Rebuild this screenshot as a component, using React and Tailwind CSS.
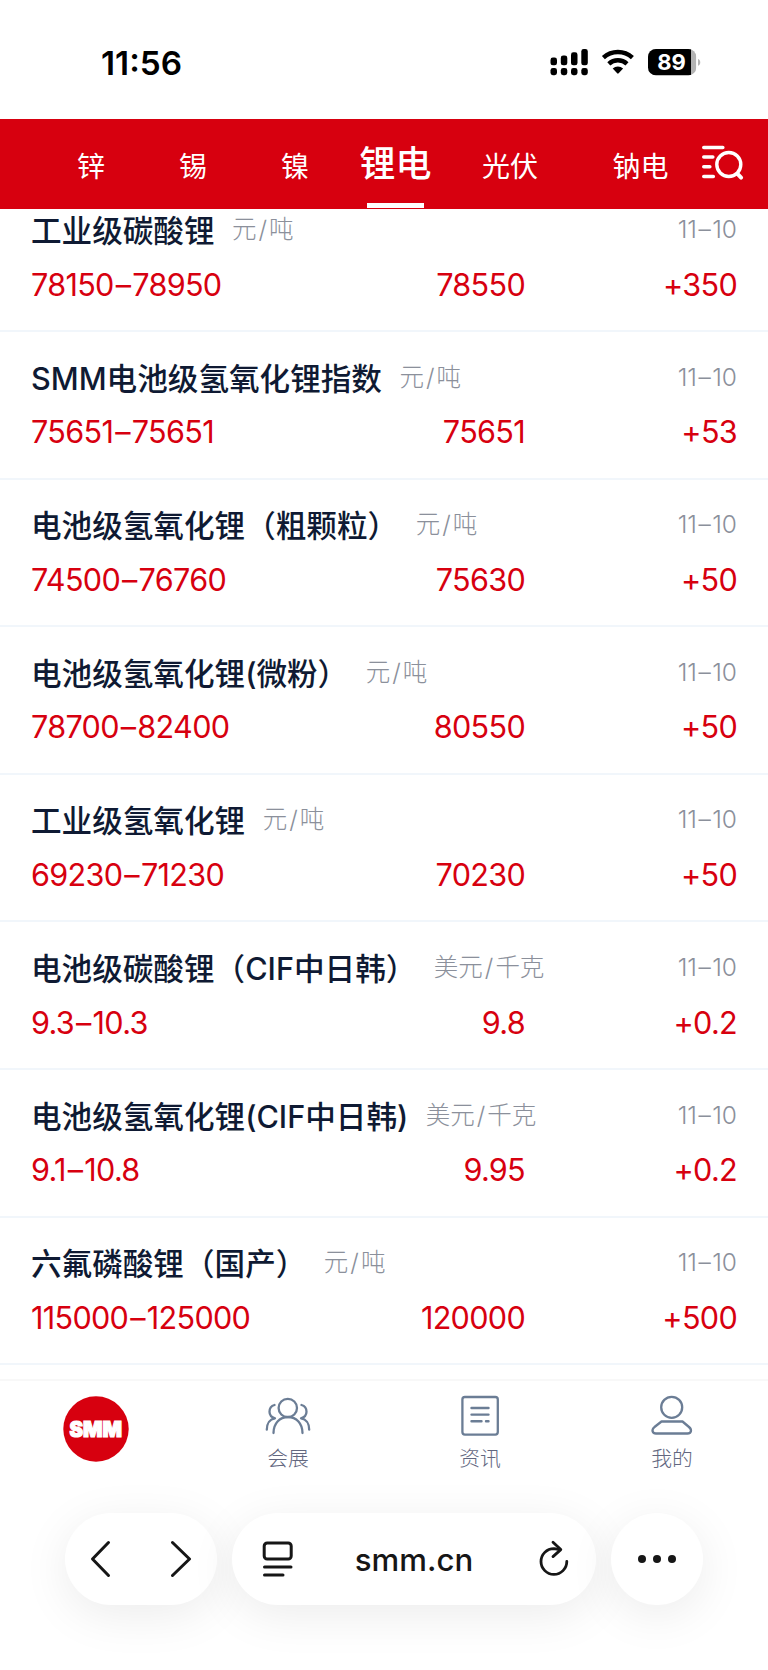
import clsx from "clsx";

const tabs = [
  { name: "锌", width: "w-[109px]" },
  { name: "锡", width: "w-[95px]" },
  { name: "镍", width: "w-[109px]" },
  { name: "锂电", width: "w-[92px]", active: true },
  { name: "光伏", width: "w-[137px]" },
  { name: "钠电", width: "w-[124px]" },
];

const prices = [
  { name: "工业级碳酸锂", unit: ["元", "吨"], low: "78150", high: "78950", avg: "78550", change: "+350" },
  { name: "SMM电池级氢氧化锂指数", unit: ["元", "吨"], low: "75651", high: "75651", avg: "75651", change: "+53" },
  { name: "电池级氢氧化锂（粗颗粒）", unit: ["元", "吨"], low: "74500", high: "76760", avg: "75630", change: "+50" },
  { name: "电池级氢氧化锂(微粉）", unit: ["元", "吨"], low: "78700", high: "82400", avg: "80550", change: "+50" },
  { name: "工业级氢氧化锂", unit: ["元", "吨"], low: "69230", high: "71230", avg: "70230", change: "+50" },
  { name: "电池级碳酸锂（CIF中日韩）", unit: ["美元", "千克"], low: "9.3", high: "10.3", avg: "9.8", change: "+0.2" },
  { name: "电池级氢氧化锂(CIF中日韩)", unit: ["美元", "千克"], low: "9.1", high: "10.8", avg: "9.95", change: "+0.2" },
  { name: "六氟磷酸锂（国产）", unit: ["元", "吨"], low: "115000", high: "125000", avg: "120000", change: "+500" },
];

function StatusBar() {
  return (
    <div className="flex h-[118.5px] shrink-0 items-start justify-between pl-[101px] pr-[67px]">
      <span className="mt-[43px] text-[33.3px] leading-[40px] font-semibold text-black">11:56</span>
      <svg className="mt-[48px]" width="151" height="28" viewBox="550 48 151 28">
        {/* signal */}
        <g fill="#000">
          <rect x="550.5" y="57.5" width="6.5" height="7.8" rx="2.4" />
          <rect x="560.8" y="55.5" width="6.5" height="9.8" rx="2.4" />
          <rect x="571" y="52.3" width="6.5" height="13" rx="2.4" />
          <rect x="581.3" y="49" width="6.5" height="16.3" rx="2.4" />
          <rect x="550.5" y="68" width="6.5" height="7.2" rx="2.4" />
          <rect x="560.8" y="68" width="6.5" height="7.2" rx="2.4" />
          <rect x="571" y="68" width="6.5" height="7.2" rx="2.4" />
          <rect x="581.3" y="68" width="6.5" height="7.2" rx="2.4" />
        </g>
        {/* wifi */}
        <g fill="none" stroke="#000" strokeWidth="4.4">
          <path d="M603.4 57.6a21.5 21.5 0 0 1 29 0" />
          <path d="M608.8 63.8a13.4 13.4 0 0 1 18.2 0" />
        </g>
        <path d="M612.7 68.6a7.6 7.6 0 0 1 10.4 0L618.6 73.3a1 1 0 0 1-1.4 0Z" fill="#000" />
        {/* battery */}
        <clipPath id="battery">
          <rect x="648" y="49" width="48.3" height="26.4" rx="8" />
        </clipPath>
        <g clipPath="url(#battery)">
          <rect x="648" y="49" width="48.3" height="26.4" fill="#b3b3b3" />
          <rect x="648" y="49" width="43" height="26.4" fill="#000" />
        </g>
        <path d="M698 59c3 .8 3 6 0 6.8Z" fill="#b3b3b3" />
        <text x="671.5" y="70" textAnchor="middle" fontSize="22" fontWeight="700" fill="#fff">89</text>
      </svg>
    </div>
  );
}

function Header() {
  return (
    <div className="flex h-[90.5px] shrink-0 bg-[#d7000f] pl-[36.5px] text-white">
      {tabs.map((tab) => (
        <div key={tab.name} className={clsx("flex shrink-0 flex-col items-center justify-between", tab.width)}>
          <span
            className={clsx(
              "whitespace-nowrap",
              tab.active ? "mt-[20px] text-[36px] leading-[50px] font-medium" : "mt-[27.5px] text-[28px] leading-[42px]"
            )}
          >
            {tab.name}
          </span>
          {tab.active && <span className="mb-[1px] h-[5px] w-[57px] bg-white" />}
        </div>
      ))}
      <svg className="mt-[24.5px] -ml-[2px] shrink-0" width="44" height="38" viewBox="702 143 44 38" fill="none" stroke="#fff" strokeLinecap="round">
        <path d="M704.8 147.5h19M704.8 157h9M704.8 166.8h6M704.8 176.5h9.5" strokeWidth="3.6" />
        <circle cx="729.8" cy="164.5" r="12" strokeWidth="3.4" />
        <path d="M738.5 173.8l3.6 3.8" strokeWidth="4" />
      </svg>
    </div>
  );
}

function PriceRow({ item }) {
  return (
    <div className="h-[147.6px] border-b-2 border-[#f1f6fb] px-[31px] pt-[23.6px]">
      <div className="flex h-[44px] whitespace-nowrap text-[24.5px] leading-[42px] font-light text-[#8b909b]">
        <span className="text-[30.6px] leading-[45px] font-medium text-[#0f1a33]">{item.name}</span>
        <span className="ml-[17.5px]">
          {item.unit[0]}
          <span className="mx-[2px]">/</span>
          {item.unit[1]}
        </span>
        <span className="ml-auto">
          11<span className="mx-[1.5px]">–</span>10
        </span>
      </div>
      <div className="mt-[10.6px] flex h-[44px] items-center text-[30.6px] tracking-[-0.7px] text-[#d7000f]">
        <span className="w-[300px]">
          {item.low}
          <span className="mx-[2px]">–</span>
          {item.high}
        </span>
        <span className="w-[194px] text-right">{item.avg}</span>
        <span className="flex-1 text-right">{item.change}</span>
      </div>
    </div>
  );
}

function TabItem({ label, children }) {
  return (
    <div className="flex w-48 flex-col items-center">
      <svg className="mt-[11px]" width="48" height="48" viewBox="0 0 48 48" fill="none" stroke="#6b7d95" strokeWidth="2.3" strokeLinecap="round" strokeLinejoin="round">
        {children}
      </svg>
      <span className="mt-[4px] text-[20.8px] leading-[30px] font-light text-[#62677f]">{label}</span>
    </div>
  );
}

function TabBar() {
  return (
    <div className="flex h-[100px] shrink-0 border-t-2 border-[#f8f8f8]">
      <div className="flex w-48 justify-center">
        <svg className="mt-[14px]" width="68" height="68" viewBox="0 0 68 68">
          <circle cx="34" cy="34" r="32.7" fill="#d7000f" />
          <text
            x="7.5"
            y="41.6"
            fontSize="21"
            fontWeight="900"
            fill="#fff"
            stroke="#fff"
            strokeWidth="1.2"
            textLength="52.5"
            lengthAdjust="spacingAndGlyphs"
          >
            SMM
          </text>
        </svg>
      </div>
      <TabItem label="会展">
        <circle cx="23.8" cy="16" r="9.2" />
        <path d="M9.5 41c0-9.5 6-16 14.5-16s14.5 6.5 14.5 16" />
        <path d="M10.5 13c-3 .8-5 3.5-5 6.8s2 5.500 5.500 6.500c-5 .7-8.200 5-8.200 11.400" />
        <path d="M37.5 13c3 .8 5 3.5 5 6.8s-2 5.500-5.500 6.500c5 .7 8.200 5 8.200 11.400" />
      </TabItem>
      <TabItem label="资讯">
        <rect x="6.4" y="5" width="35.4" height="37.6" rx="2.5" />
        <path d="M15.5 16h17M15.5 22.6h17M15.5 29.3h10M30 29.3h2.5" strokeWidth="2.4" />
      </TabItem>
      <TabItem label="我的">
        <circle cx="23.7" cy="15.3" r="10.5" />
        <path d="M13.5 29.5h21l6.5 5.5c3.500 3 2 6.500-1.500 6.500H8c-3.500 0-5-3.500-1.500-6.500Z" />
      </TabItem>
    </div>
  );
}

function BrowserBar() {
  const pill = "flex h-[92px] items-center rounded-full bg-white shadow-[0_10px_48px_rgba(0,0,0,0.08)]";
  return (
    <div className="flex flex-1 items-start gap-[15px] pt-[34px] pl-[65px] text-[#161616]">
      <div className={clsx(pill, "w-[152px] justify-between px-[24px]")}>
        <svg width="22" height="38" viewBox="0 0 22 38" fill="none" stroke="currentColor" strokeWidth="3" strokeLinecap="round" strokeLinejoin="round">
          <path d="M19.5 2.5L3.5 19l16 16.5" />
        </svg>
        <svg width="22" height="38" viewBox="0 0 22 38" fill="none" stroke="currentColor" strokeWidth="3" strokeLinecap="round" strokeLinejoin="round">
          <path d="M1.5 2.5L18.5 19l-17 16.5" />
        </svg>
      </div>
      <div className={clsx(pill, "w-[364px] justify-between pr-[26px] pl-[30px]")}>
        <svg width="32" height="38" viewBox="0 0 32 38" fill="none" stroke="currentColor" strokeWidth="3" strokeLinecap="round">
          <rect x="2.2" y="3" width="27" height="16" rx="3" />
          <path d="M2.5 27h26.5M2.5 35h18.5" />
        </svg>
        <span className="mr-[4px] mb-[-1px] text-[31.2px] leading-[40px] font-medium">smm.cn</span>
        <svg width="32" height="38" viewBox="0 0 32 38" fill="none" stroke="currentColor" strokeWidth="2.8" strokeLinecap="round" strokeLinejoin="round">
          <path d="M28.8 21.5A12.9 12.900 0 1 1 15.900 8.600L21.500 9.500" />
          <path d="M15 2.2l7.800 7.400-7.800 7" />
        </svg>
      </div>
      <div className={clsx(pill, "w-[92px] justify-center gap-[7px]")}>
        <span className="size-2 rounded-full bg-[#161616]" />
        <span className="size-2 rounded-full bg-[#161616]" />
        <span className="size-2 rounded-full bg-[#161616]" />
      </div>
    </div>
  );
}

export default function App() {
  return (
    <div className="flex h-[1670px] w-[768px] flex-col overflow-hidden bg-white font-[Inter,'Noto_Sans_CJK_SC',sans-serif]">
      <StatusBar />
      <Header />
      <div className="h-[1170px] shrink-0 overflow-hidden">
        <div className="-mt-[24.6px]">
          {prices.map((item) => (
            <PriceRow key={item.name} item={item} />
          ))}
        </div>
      </div>
      <TabBar />
      <BrowserBar />
    </div>
  );
}
